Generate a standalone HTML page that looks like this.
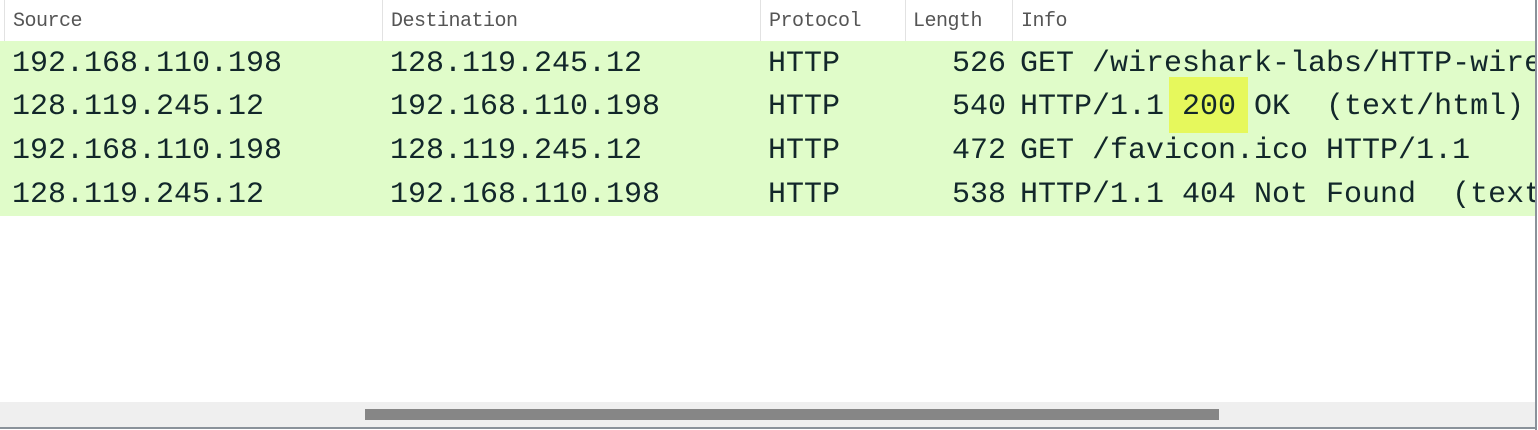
<!DOCTYPE html>
<html><head><style>
body{margin:0;width:1538px;height:430px;overflow:hidden;background:#fff;position:relative}
.hdr{position:absolute;top:0;left:0;width:1535px;height:41px;background:#fff}
.h{position:absolute;top:10px;font:20px "Liberation Mono",monospace;color:#555;letter-spacing:-0.5px}
.div{position:absolute;top:0;width:1px;height:41px;background:#e2e2e2}
.clip{position:absolute;top:0;left:0;width:1535px;height:430px;overflow:hidden}
.rows{position:absolute;top:41px;left:0;width:1535px;height:175px;background:#e0fcc9}
.r{position:absolute;left:0;width:1535px;height:44px;font:30px "Liberation Mono",monospace;color:#12272a;white-space:pre;line-height:44px}
.r span{position:absolute;top:1px}
.len{text-align:right;width:100px;left:906px}
.hl{position:absolute;left:1169px;top:77px;width:79px;height:56px;background:#e6f85c}
</style></head><body>
<div class="clip">
<div class="hdr">
<div class="div" style="left:4px"></div>
<div class="h" style="left:13px">Source</div>
<div class="div" style="left:382px"></div>
<div class="h" style="left:391px">Destination</div>
<div class="div" style="left:760px"></div>
<div class="h" style="left:769px">Protocol</div>
<div class="div" style="left:905px"></div>
<div class="h" style="left:913px">Length</div>
<div class="div" style="left:1012px"></div>
<div class="h" style="left:1021px">Info</div>
</div>
<div class="rows"></div>
<div class="hl"></div>
<div class="r" style="top:41px"><span style="left:12px">192.168.110.198</span><span style="left:390px">128.119.245.12</span><span style="left:768px">HTTP</span><span class="len">526</span><span style="left:1020px">GET /wireshark-labs/HTTP-wireshark-file1.html HTTP/1.1</span></div>
<div class="r" style="top:84px"><span style="left:12px">128.119.245.12</span><span style="left:390px">192.168.110.198</span><span style="left:768px">HTTP</span><span class="len">540</span><span style="left:1020px">HTTP/1.1 200 OK  (text/html)</span></div>
<div class="r" style="top:128px"><span style="left:12px">192.168.110.198</span><span style="left:390px">128.119.245.12</span><span style="left:768px">HTTP</span><span class="len">472</span><span style="left:1020px">GET /favicon.ico HTTP/1.1</span></div>
<div class="r" style="top:172px"><span style="left:12px">128.119.245.12</span><span style="left:390px">192.168.110.198</span><span style="left:768px">HTTP</span><span class="len">538</span><span style="left:1020px">HTTP/1.1 404 Not Found  (text/html)</span></div>
<div style="position:absolute;left:0;top:402px;width:1535px;height:25px;background:#efefef"></div>
<div style="position:absolute;left:365px;top:409px;width:854px;height:11px;background:#868686"></div>
</div>
<div style="position:absolute;left:1535px;top:0;width:2px;height:430px;background:#8a929a"></div>
<div style="position:absolute;left:0;top:427px;width:1537px;height:2px;background:#8a929a"></div>
</body></html>
